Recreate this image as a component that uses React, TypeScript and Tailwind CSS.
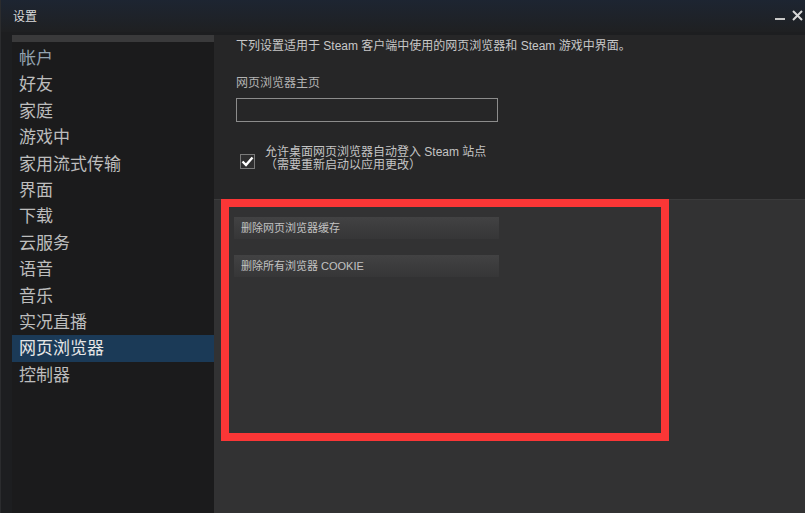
const font = { fontFamily: '"Liberation Sans", "Noto Sans CJK SC", sans-serif' };

const navItems = [
  "帐户",
  "好友",
  "家庭",
  "游戏中",
  "家用流式传输",
  "界面",
  "下载",
  "云服务",
  "语音",
  "音乐",
  "实况直播",
  "网页浏览器",
  "控制器",
];

const Sidebar = () => {
  return (
    <div className="w-[202px] flex flex-col bg-[#1b1b1c]">
      <div className="h-[7px] bg-[#3a3a3b]"></div>
      <div className="pt-[3px] flex flex-col">
        {navItems.map((item) => (
          <div
            key={item}
            className={
              item === "网页浏览器"
                ? "h-[26.4px] leading-[28px] pl-[7px] text-[17px] text-[#e6e6e6] bg-[#1b3a57]"
                : item === "帐户"
                  ? "h-[26.4px] leading-[28px] pl-[7px] text-[17px] text-[#93a3b1]"
                  : "h-[26.4px] leading-[28px] pl-[7px] text-[17px] text-[#bdbdbd]"
            }
          >
            {item}
          </div>
        ))}
      </div>
    </div>
  );
};

const App = () => {
  return (
    <div
      style={font}
      className="w-[805px] h-[513px] bg-[#1d1e20] flex flex-col overflow-hidden border-l border-[#2b2c2e]"
    >
      <div className="h-[32px] shrink-0 bg-gradient-to-b from-[#1d2532] to-[#1f2022] flex items-center justify-between pl-[12px] pr-[2px]">
        <span className="text-[12px] text-[#dcdcdc] mt-[1px]">设置</span>
        <div className="flex items-end gap-[7px] mt-[-2px]">
          <div className="w-[10px] h-[2px] bg-[#c8c8c8] mb-[1px]"></div>
          <svg width="11" height="11" viewBox="0 0 11 11">
            <path d="M1 1 L10 10 M10 1 L1 10" stroke="#d8d8d8" strokeWidth="2" />
          </svg>
        </div>
      </div>

      <div className="flex flex-1 pt-[3px] pl-[11px]">
        <Sidebar />

        <div className="flex-1 flex flex-col">
          <div className="h-[164px] shrink-0 bg-[#262627] pl-[22px] pt-[3px]">
            <p className="text-[12px] leading-[16px] text-[#c8c8c8]">
              下列设置适用于 Steam 客户端中使用的网页浏览器和 Steam 游戏中界面。
            </p>
            <p className="mt-[21px] text-[12px] leading-[16px] text-[#b4b4b4]">网页浏览器主页</p>
            <div className="mt-[7px] w-[262px] h-[24px] border border-[#8c8c8c] bg-[#262627]"></div>
            <div className="mt-[24px] flex items-end gap-[10px] pl-[4px]">
              <div className="w-[15px] h-[15px] mb-[3px] border border-[#7a7a7a] bg-[#2e2e2f] flex items-center justify-center">
                <svg width="13" height="11" viewBox="0 0 13 11">
                  <path d="M1.5 5.5 L5 9 L11.5 1.5" stroke="#ffffff" strokeWidth="2.4" fill="none" />
                </svg>
              </div>
              <div className="text-[12px] leading-[13px] text-[#c4c4c4]">
                <p>允许桌面网页浏览器自动登入 Steam 站点</p>
                <p>（需要重新启动以应用更改）</p>
              </div>
            </div>
          </div>

          <div className="flex-1 bg-[#323233] border-t border-[#3b3b3c] pl-[7px]">
            <div className="w-[448px] h-[242px] mt-[-1px] border-[8px] border-[#fb3636] pl-[5px] pt-[10px] flex flex-col gap-[16px]">
              <div className="w-[265px] h-[22px] bg-gradient-to-b from-[#424243] to-[#363637] text-[11px] leading-[22px] pl-[7px] text-[#c2c2c2]">
                删除网页浏览器缓存
              </div>
              <div className="w-[265px] h-[22px] bg-gradient-to-b from-[#424243] to-[#363637] text-[11px] leading-[22px] pl-[7px] text-[#c2c2c2]">
                删除所有浏览器 COOKIE
              </div>
            </div>
          </div>
        </div>
      </div>
    </div>
  );
};

export default App;
